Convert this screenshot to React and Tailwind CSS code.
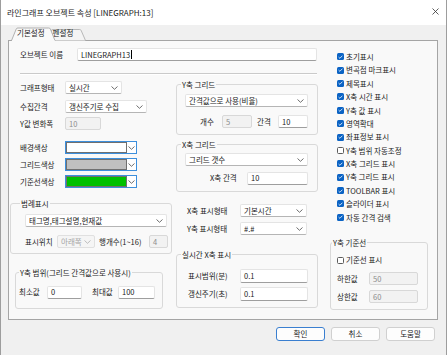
import React from "react";

const F = "font-['Noto_Sans_CJK_KR','Noto_Sans_CJK_SC',sans-serif]";

function Chev({ color = "#5f5f5f" }) {
  return (
    <svg width="7" height="4" viewBox="0 0 7 4" className="shrink-0">
      <path d="M0.5 0.5L3.5 3.3L6.5 0.5" fill="none" stroke={color} strokeWidth="0.9" />
    </svg>
  );
}

function Combo({ className = "", text, disabled }) {
  return (
    <div
      className={`flex items-center justify-between shrink-0 h-[13px] pl-[3px] pr-[3px] border rounded-[2px] ${
        disabled
          ? "bg-[#f5f5f5] border-[#e0e0e0] text-[#a3a3a3]"
          : "bg-white border-[#e4e4e4] border-b-[#b5b5b5]"
      } ${className}`}
    >
      <span className="whitespace-nowrap">{text}</span>
      <Chev color={disabled ? "#b5b5b5" : "#5f5f5f"} />
    </div>
  );
}

function Input({ className = "", text, disabled, cursor }) {
  return (
    <div
      className={`flex items-center shrink-0 h-[13px] pl-[3px] border rounded-[2px] ${
        disabled
          ? "bg-[#f2f2f2] border-[#d8d8d8] text-[#8c8c8c]"
          : "bg-white border-[#e4e4e4] border-b-[#9e9e9e]"
      } ${className}`}
    >
      <span className="whitespace-nowrap">{text}</span>
      {cursor && <span className="w-[1px] h-[9px] bg-black ml-[0.5px]" />}
    </div>
  );
}

function ColorPick({ swatch }) {
  return (
    <div className="flex h-[13px] w-[72px] border border-[#3d8fdc] bg-white shrink-0">
      <div className={`w-[61px] h-full border border-[#707070] ${swatch}`} />
      <div className="flex-1 flex items-center justify-center">
        <Chev />
      </div>
    </div>
  );
}

function Group({ label, labelPos, className = "", children }) {
  return (
    <div className={`relative border border-[#d9d9d9] rounded-[3px] shrink-0 ${className}`}>
      <span className={`absolute -top-[5px] px-[1px] bg-[#f9f9f9] leading-[9px] whitespace-nowrap ${labelPos}`}>
        {label}
      </span>
      {children}
    </div>
  );
}

function Check({ checked, label }) {
  return (
    <div className="flex items-center h-[13.4px]">
      {checked ? (
        <span className="w-[7px] h-[7px] rounded-[1.5px] bg-[#0b63c4] flex items-center justify-center shrink-0">
          <svg width="5" height="4" viewBox="0 0 5 4">
            <path d="M0.6 2.1L1.9 3.3L4.4 0.7" stroke="white" fill="none" strokeWidth="0.8" />
          </svg>
        </span>
      ) : (
        <span className="w-[7px] h-[7px] rounded-[1.5px] bg-white border border-[#5b5b5b] shrink-0" />
      )}
      <span className="ml-[2px] whitespace-nowrap">{label}</span>
    </div>
  );
}

const checks = [
  ["초기표시", true],
  ["변곡점 마크표시", true],
  ["제목표시", true],
  ["X축 시간 표시", true],
  ["Y축 값 표시", true],
  ["영역확대", true],
  ["좌표정보 표시", true],
  ["Y축 범위 자동조정", false],
  ["X축 그리드 표시", true],
  ["Y축 그리드 표시", true],
  ["TOOLBAR 표시", true],
  ["슬라이더 표시", true],
  ["자동 간격 검색", true],
];

export default function App() {
  return (
    <div
      className={`${F} text-[7.5px] leading-none text-[#1b1b1b] w-[447px] h-[355px] bg-[#f0f0f0] border-x border-[#9d9d9d] overflow-hidden flex flex-col`}
    >
      {/* title bar */}
      <div className="h-[25px] bg-white flex items-center justify-between pl-[6px] pr-[7px] shrink-0">
        <span className="text-[8px] whitespace-nowrap">라인그래프 오브젝트 속성 [LINEGRAPH:13]</span>
        <svg width="7" height="7" viewBox="0 0 7 7" className="mb-[3px]">
          <path d="M0.5 0.5L6.5 6.5M6.5 0.5L0.5 6.5" stroke="#333" strokeWidth="0.8" />
        </svg>
      </div>

      {/* tab strip */}
      <div className="relative h-[15px] shrink-0 flex items-end">
        <svg width="100" height="17" viewBox="0 0 100 17" className="absolute left-0 top-0 z-10 overflow-visible">
          <path
            d="M48 15.5L50.3 5.6Q50.6 4.5 51.8 4.5L78.6 4.5Q79.8 4.5 80.2 5.6L84.5 15.5"
            fill="#f4f4f4"
            stroke="#a8a8a8"
            strokeWidth="0.8"
          />
          <path
            d="M10.5 15.6L15.2 4.1Q15.6 3 16.8 3L47.8 3Q49 3 49.4 4.1L54 15.6"
            fill="#f9f9f9"
            stroke="#a0a0a0"
            strokeWidth="0.8"
          />
          <rect x="11" y="15" width="42.6" height="2" fill="#f9f9f9" />
        </svg>
        <div className="relative z-20 flex items-center h-[12px] pl-[16px] mb-[1px]">
          <span className="whitespace-nowrap">기본설정</span>
          <span className="ml-[8px] whitespace-nowrap">펜설정</span>
        </div>
      </div>

      {/* panel */}
      <div className="ml-[7px] w-[430px] h-[280px] border border-[#a5a5a5] bg-[#f9f9f9] flex shrink-0">
        {/* left + middle */}
        <div className="w-[321px] flex flex-col shrink-0">
          <div className="mt-[7px] ml-[11px] flex items-center h-[13px]">
            <span className="w-[57px] shrink-0">오브젝트 이름</span>
            <Input className="w-[240px]" text="LINEGRAPH13" cursor />
          </div>
          <div className="mt-[12px] ml-[11px] w-[297px] h-[2px] border-t border-[#cacaca] border-b border-b-white" />

          <div className="flex ml-[1px] gap-[4px]">
            {/* left column */}
            <div className="w-[162px] flex flex-col shrink-0">
              <div className="mt-[6px] h-[13px] flex items-center pl-[10px]">
                <span className="w-[45px] shrink-0">그래프형태</span>
                <Combo className="w-[57px]" text="실시간" />
              </div>
              <div className="mt-[6px] h-[13px] flex items-center pl-[10px]">
                <span className="w-[45px] shrink-0">수집간격</span>
                <Combo className="w-[82px]" text="갱신주기로 수집" />
              </div>
              <div className="mt-[4px] h-[13px] flex items-center pl-[10px]">
                <span className="w-[45px] shrink-0">Y값 변화폭</span>
                <Input className="w-[36px]" text="10" disabled />
              </div>
              <div className="mt-[11px] h-[13px] flex items-center pl-[10px]">
                <span className="w-[45px] shrink-0">배경색상</span>
                <ColorPick swatch="bg-white" />
              </div>
              <div className="mt-[4px] h-[13px] flex items-center pl-[10px]">
                <span className="w-[45px] shrink-0">그리드색상</span>
                <ColorPick swatch="bg-[#c0c0c0]" />
              </div>
              <div className="mt-[4px] h-[13px] flex items-center pl-[10px]">
                <span className="w-[45px] shrink-0">기준선색상</span>
                <ColorPick swatch="bg-[#00c000]" />
              </div>

              <Group label="범례표시" labelPos="left-[9px]" className="mt-[15px] w-[162px] h-[51px]">
                <Combo className="mt-[10px] ml-[14px] w-[142px]" text="태그명,태그설명,현재값" />
                <div className="mt-[8px] ml-[14px] flex items-center h-[13px]">
                  <span className="w-[32px] shrink-0">표시위치</span>
                  <Combo className="w-[38px]" text="아래쪽" disabled />
                  <span className="ml-[4px] w-[50px] shrink-0 whitespace-nowrap">행개수(1~16)</span>
                  <Input className="w-[19px]" text="4" disabled />
                </div>
              </Group>

              <Group
                label="Y축 범위(그리드 간격값으로 사용시)"
                labelPos="left-[3px]"
                className="mt-[18px] ml-[5px] w-[148px] h-[37px]"
              >
                <div className="mt-[13px] ml-[3px] flex items-center h-[12px]">
                  <span className="w-[28px] shrink-0">최소값</span>
                  <Input className="w-[35px] h-[12px]" text="0" />
                  <span className="ml-[10px] w-[26px] shrink-0">최대값</span>
                  <Input className="w-[37px] h-[12px]" text="100" />
                </div>
              </Group>
            </div>

            {/* middle column */}
            <div className="w-[142px] flex flex-col shrink-0">
              <Group label="Y축 그리드" labelPos="left-[4px]" className="mt-[9px] h-[51px]">
                <Combo className="mt-[9px] ml-[8px] w-[123px]" text="간격값으로 사용(비율)" />
                <div className="mt-[8px] ml-[23px] flex items-center h-[13px]">
                  <span className="w-[22px] shrink-0">개수</span>
                  <Input className="w-[30px]" text="5" disabled />
                  <span className="ml-[5px] w-[21px] shrink-0">간격</span>
                  <Input className="w-[30px]" text="10" />
                </div>
              </Group>

              <Group label="X축 그리드" labelPos="left-[4px]" className="mt-[9px] h-[48px]">
                <Combo className="mt-[8px] ml-[8px] w-[123px]" text="그리드 갯수" />
                <div className="mt-[6px] ml-[33px] flex items-center h-[12px]">
                  <span className="w-[37px] shrink-0">X축 간격</span>
                  <Input className="w-[61px] h-[12px]" text="10" />
                </div>
              </Group>

              <div className="mt-[12px] h-[13px] flex items-center pl-[11px]">
                <span className="w-[53px] shrink-0">X축 표시형태</span>
                <Combo className="w-[67px]" text="기본시간" />
              </div>
              <div className="mt-[5px] h-[13px] flex items-center pl-[11px]">
                <span className="w-[53px] shrink-0">Y축 표시형태</span>
                <Combo className="w-[67px]" text="#.#" />
              </div>

              <Group label="실시간 X축 표시" labelPos="left-[4px]" className="mt-[19px] h-[54px]">
                <div className="mt-[14px] ml-[11px] flex items-center h-[14px]">
                  <span className="w-[52px] shrink-0">표시범위(분)</span>
                  <Input className="w-[68px] h-[14px]" text="0.1" />
                </div>
                <div className="mt-[4px] ml-[11px] flex items-center h-[14px]">
                  <span className="w-[52px] shrink-0">갱신주기(초)</span>
                  <Input className="w-[68px] h-[14px]" text="0.1" />
                </div>
              </Group>
            </div>
          </div>
        </div>

        {/* right column */}
        <div className="w-[98px] flex flex-col shrink-0">
          <div className="mt-[9px] pl-[7px] flex flex-col">
            {checks.map(([l, c]) => (
              <Check key={l} label={l} checked={c} />
            ))}
          </div>
          <Group label="Y축 기준선" labelPos="left-[1px]" className="mt-[18px] w-[98px] h-[68px]">
            <div className="mt-[12px] ml-[6px] h-[10px] flex items-center">
              <Check label="기준선 표시" checked={false} />
            </div>
            <div className="mt-[7px] ml-[6px] flex items-center h-[13px]">
              <span className="w-[32px] shrink-0">하한값</span>
              <Input className="w-[49px]" text="50" disabled />
            </div>
            <div className="mt-[5px] ml-[6px] flex items-center h-[13px]">
              <span className="w-[32px] shrink-0">상한값</span>
              <Input className="w-[49px]" text="60" disabled />
            </div>
          </Group>
        </div>
      </div>

      {/* buttons */}
      <div className="mt-[7px] flex justify-end gap-[6px] pr-[11px]">
        <button className="w-[49px] h-[14px] bg-[#fdfdfd] border border-[#3a7fd0] rounded-[3px] flex items-center justify-center">
          확인
        </button>
        <button className="w-[49px] h-[14px] bg-[#fdfdfd] border border-[#d0d0d0] rounded-[3px] flex items-center justify-center">
          취소
        </button>
        <button className="w-[49px] h-[14px] bg-[#fdfdfd] border border-[#d0d0d0] rounded-[3px] flex items-center justify-center">
          도움말
        </button>
      </div>
    </div>
  );
}
